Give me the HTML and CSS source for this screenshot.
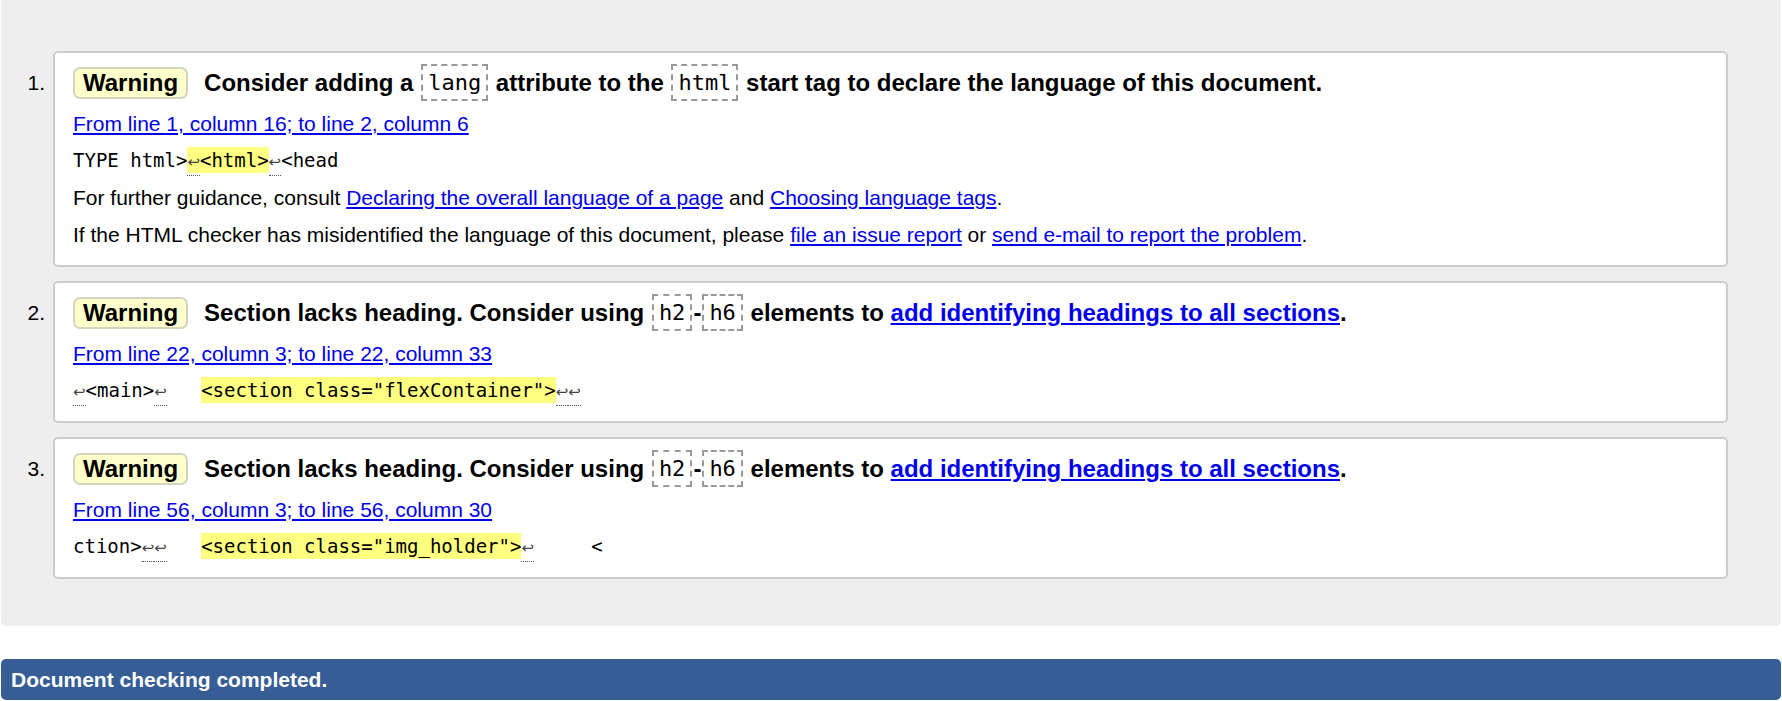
FILE: index.html
```html
<!DOCTYPE html>
<html lang="en">
<head>
<meta charset="utf-8">
<title>Validation results</title>
<link rel="stylesheet" href="styles.css">
</head>
<body>
<div class="page">
  <div class="results">
    <ol class="messages">
      <li class="item">
        <span class="num">1.</span>
        <div class="card">
          <p class="msg"><strong class="badge">Warning</strong><span class="text">Consider adding a <code>lang</code> attribute to the <code>html</code> start tag to declare the language of this document.</span></p>
          <p class="loc"><a href="#">From line 1, column 16; to line 2, column 6</a></p>
          <p class="extract">TYPE html&gt;<mark><b>↩</b>&lt;html&gt;</mark><b>↩</b>&lt;head</p>
          <p class="info">For further guidance, consult <a href="#">Declaring the overall language of a page</a> and <a href="#">Choosing language tags</a>.</p>
          <p class="info">If the HTML checker has misidentified the language of this document, please <a href="#">file an issue report</a> or <a href="#">send e-mail to report the problem</a>.</p>
        </div>
      </li>
      <li class="item">
        <span class="num">2.</span>
        <div class="card">
          <p class="msg"><strong class="badge">Warning</strong><span class="text">Section lacks heading. Consider using <code>h2</code>-<code>h6</code> elements to <a href="#">add identifying headings to all sections</a>.</span></p>
          <p class="loc"><a href="#">From line 22, column 3; to line 22, column 33</a></p>
          <p class="extract"><b>↩</b>&lt;main&gt;<b>↩</b>   <mark>&lt;section class="flexContainer"&gt;</mark><b>↩</b><b>↩</b></p>
        </div>
      </li>
      <li class="item">
        <span class="num">3.</span>
        <div class="card">
          <p class="msg"><strong class="badge">Warning</strong><span class="text">Section lacks heading. Consider using <code>h2</code>-<code>h6</code> elements to <a href="#">add identifying headings to all sections</a>.</span></p>
          <p class="loc"><a href="#">From line 56, column 3; to line 56, column 30</a></p>
          <p class="extract">ction&gt;<b>↩</b><b>↩</b>   <mark>&lt;section class="img_holder"&gt;</mark><b>↩</b>     &lt;</p>
        </div>
      </li>
    </ol>
  </div>
  <p class="status">Document checking completed.</p>
</div>
</body>
</html>
```

FILE: styles.css
```css
html, body {
  margin: 0;
  padding: 0;
  background: #fff;
}

body {
  font-family: "Liberation Sans", Arial, sans-serif;
  font-size: 21px;
  color: #000;
}

.page {
  padding: 0 1px;
}

.results {
  background: #eeeeee;
  border-radius: 0 0 5px 5px;
  padding: 51px 53px 47px 0;
}

.messages {
  list-style: none;
  margin: 0;
  padding: 0;
  display: flex;
  flex-direction: column;
  gap: 14px;
}

.item {
  display: grid;
  grid-template-columns: 52px 1fr;
}

.num {
  text-align: right;
  padding-right: 8px;
  padding-top: 12px;
  line-height: 40px;
}

.card {
  background: #fff;
  border: 2px solid #cccccc;
  border-radius: 5px;
  padding: 10px 18px 12px;
}

.card p {
  margin: 0;
}

a {
  color: #0000ee;
  text-decoration: underline;
}

.msg {
  font-size: 24px;
  font-weight: bold;
  line-height: 40px;
  height: 40px;
  white-space: nowrap;
}

.badge {
  display: inline-block;
  vertical-align: middle;
  background: #ffffcc;
  border: 2px solid #d4d4c0;
  border-radius: 7px;
  padding: 0 8px;
  line-height: 28px;
  margin-right: 16px;
  position: relative;
  top: -2px;
}

.msg code {
  display: inline-block;
  vertical-align: middle;
  font-family: "DejaVu Sans Mono", monospace;
  font-weight: normal;
  font-size: 22px;
  line-height: 25px;
  padding: 4px 5px;
  border: 2px dashed #999999;
  margin: 0 1px;
  position: relative;
  top: -2px;
}

.loc {
  margin-top: 2px !important;
  line-height: 37px;
}

.extract {
  font-family: "DejaVu Sans Mono", monospace;
  font-size: 19px;
  line-height: 37px;
  height: 37px;
  white-space: pre;
}

.extract mark {
  background: #ffff80;
  color: #000;
  padding: 2px 0;
}

.extract b {
  font-family: "DejaVu Sans", sans-serif;
  font-size: 15px;
  line-height: 1;
  font-weight: normal;
  color: #444;
  border-bottom: 1px dotted #555;
  padding-bottom: 4px;
}

.info {
  line-height: 37px;
}

.status {
  margin: 33px 0 0;
  background: #365d95;
  color: #fff;
  font-weight: bold;
  line-height: 41px;
  padding: 0 10px;
  border-radius: 5px;
}
```
